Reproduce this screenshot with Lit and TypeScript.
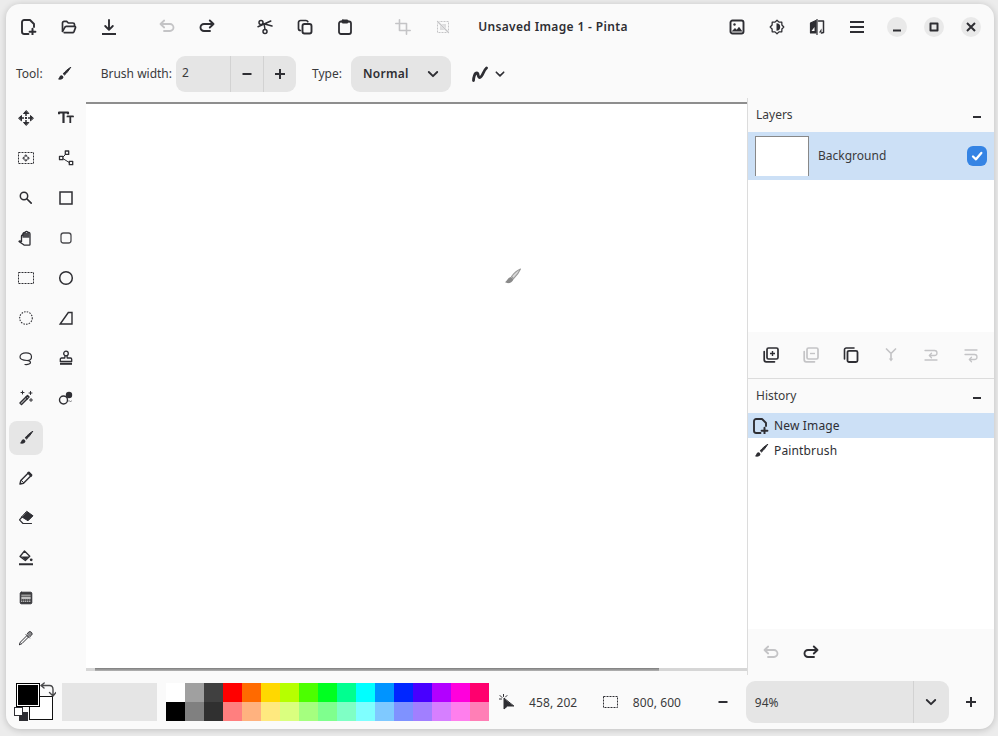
import { LitElement, html, css, svg } from 'lit'
import { customElement } from 'lit/decorators.js'

const icon = (body: unknown, size = 16, cls = '') => html`<svg class=${cls} width=${size} height=${size} viewBox="0 0 16 16" fill="none" stroke="currentColor" stroke-width="1.5" stroke-linecap="round" stroke-linejoin="round">${body}</svg>`

const paths = {
	newImage: svg`<path d="M7.500 15H3.200A2.200 2.200 0 0 1 1 12.800V3.200A2.200 2.200 0 0 1 3.200 1H9l4 4v3" stroke-width="1.900"/><path d="M11.500 9.800v5.800M8.600 12.800h5.800" stroke-width="2"/>`,
	open: svg`<path d="M1.500 12V4a1.600 1.600 0 0 1 1.600-1.600h2.600l1.600 1.600h4.600A1.600 1.600 0 0 1 13.500 5.600V7" stroke-width="1.700"/><path d="M3.200 13.600h8.300a1.600 1.600 0 0 0 1.500-1l1.500-4a.9.9 0 0 0-.9-1.200H5.200a1.500 1.500 0 0 0-1.400 1L1.600 12.400" stroke-width="1.700"/>`,
	save: svg`<path d="M8 1v9.500M4.200 7 8 10.800 11.800 7" stroke-width="1.900"/><path d="M1 15h14" stroke-width="1.800" stroke-linecap="butt"/>`,
	undo: svg`<path d="M5.200 1.500 1.500 5l3.700 3.500M1.500 5H11a3.500 3.500 0 0 1 0 7H5" stroke-width="1.800"/>`,
	redo: svg`<path d="M10.800 1.500 14.500 5l-3.700 3.500M14.500 5H5a3.500 3.500 0 0 0 0 7h6" stroke-width="1.900"/>`,
	cut: svg`<circle cx="4" cy="3.500" r="2" stroke-width="1.500"/><circle cx="8" cy="12.500" r="2" stroke-width="1.500"/><path d="M5.800 4.500 15 7M1 7.800 13.800 2M7.300 6l.7 4.500" stroke-width="1.500"/>`,
	copy: svg`<path d="M3.500 11.500A2 2 0 0 1 1.500 9.500V3.500a2 2 0 0 1 2-2h5.500a2 2 0 0 1 1.800 1.200" stroke-width="1.700"/><rect x="5.500" y="5" width="9" height="9.500" rx="2" stroke-width="1.900"/>`,
	paste: svg`<rect x="2" y="2.500" width="12" height="12.500" rx="2" stroke-width="1.800"/><rect x="5" y="1" width="6" height="3" rx=".8" fill="currentColor" stroke-width="1"/>`,
	crop: svg`<path d="M4.500 .8V11.500H15.200M.8 4.500H11.500V15.200" stroke-width="1.600"/>`,
	deselect: svg`<rect x="2.500" y="2.500" width="11" height="11" stroke-width="1" stroke-dasharray="2 1" stroke-linecap="butt"/><rect x="5" y="5" width="6" height="6" fill="currentColor" stroke="none" opacity=".55"/><path d="M2 2l12 12" stroke="#fafafa" stroke-width="2.400"/><path d="M2.500 2.500l11 11" stroke-width="1.200"/>`,
	image: svg`<rect x="1.500" y="1.500" width="13" height="13" rx="2" stroke-width="1.900"/><circle cx="5.500" cy="5.500" r="1.200" fill="currentColor" stroke="none"/><path d="M2.500 12.500 6 9l1.700 1.700 2.300-3 3.500 4.800z" fill="currentColor" stroke="none"/>`,
	theme: svg`<path d="M8 1.200 10 3.100l2.800.1.100 2.800L14.800 8l-1.900 2-.1 2.800-2.800.1L8 14.800l-2-1.900-2.800-.1-.1-2.800L1.200 8l1.900-2 .1-2.800 2.800-.1z" stroke-width="1.300"/><path d="M7.500 4.300a3.700 3.700 0 0 1 0 7.400z" fill="currentColor" stroke="none"/>`,
	flip: svg`<path d="M7 1.500 1.500 4v10H7z" fill="currentColor" stroke="currentColor" stroke-width="1.200"/><path d="M8 0v16" stroke-width="1.200"/><path d="M9.500 2h5v11.500l-2 .5" stroke-width="1.500"/><path d="M2.500 12 5.500 8v4z" fill="#fafafa" stroke="none"/><path d="M10 13.500 12.500 9.500V13.500z" fill="currentColor" stroke="none"/>`,
	menu: svg`<path d="M1 3h14M1 8h14M1 13h14" stroke-width="1.800" stroke-linecap="butt"/>`,
	minus: svg`<path d="M3.500 8h9" stroke-width="2" stroke-linecap="butt"/>`,
	plus: svg`<path d="M3 8h10M8 3v10" stroke-width="2" stroke-linecap="butt"/>`,
	chevron: svg`<path d="M3.800 6 8 10.200 12.200 6" stroke-width="1.900"/>`,
	brush: svg`<path d="M14.500 1.500c-2 1-5.500 4-7.300 6.300l1.300 1.200C10.800 7 13.500 3.500 14.500 1.500z" fill="currentColor" stroke-width="1"/><path d="M5.800 9.200c-2 0-2.300 1.500-2.700 2.600-.2.700-.6 1-1.300 1.300 1.600 1.200 4.500.8 5.400-1 .5-.9.300-1.800-1.400-2.900z" fill="currentColor" stroke="none"/>`,
	curve: svg`<path d="M1.500 14.500c.1-3.500 1.300-7.500 3.300-7.500 2 0 .8 4.500 3 4.500C10.500 11.500 11 5 14.500 2" stroke-width="2.800"/>`,
	move: svg`<path d="M8 3v10M3 8h10" stroke-width="1.500"/><path d="M8 .8 5.500 3.500h5zM8 15.200l-2.500-2.700h5zM.8 8l2.700-2.500v5zM15.200 8l-2.700-2.500v5z" fill="currentColor" stroke-width="1"/><rect x="6" y="6" width="4" height="4" fill="#fafafa" stroke="none"/><rect x="7" y="7" width="2" height="2" fill="currentColor" stroke="none"/>`,
	text: svg`<path d="M1 4.200V2.500h9v1.700M5.500 2.500v10.500" stroke-width="2.200" stroke-linecap="butt"/><path d="M9.500 7.200V6.300H15v.9M12.300 6.300V13" stroke-width="1.800" stroke-linecap="butt"/>`,
	moveSel: svg`<rect x=".5" y="2.500" width="15" height="11" stroke-width="1" stroke-dasharray="2 1" stroke-linecap="butt"/><path d="M8 4.800 9.200 6.200H6.800zM8 11.200 9.200 9.800H6.800zM4.800 8 6.200 6.800V9.200zM11.200 8 9.800 6.800V9.200z" fill="currentColor" stroke="currentColor" stroke-width=".6"/>`,
	shape: svg`<path d="M8.500 3.500 4 8l8 5" stroke-width="1"/><rect x="7.300" y="1" width="3.400" height="3.400" fill="#fafafa" stroke-width="1.300"/><rect x="1.500" y="6.300" width="3.400" height="3.400" fill="#fafafa" stroke-width="1.300"/><rect x="11.300" y="11.300" width="3.400" height="3.400" fill="#fafafa" stroke-width="1.300"/>`,
	zoom: svg`<circle cx="6" cy="6" r="3.700" stroke-width="1.500"/><path d="M9 9l4.200 4.200" stroke-width="1.700"/>`,
	rect: svg`<rect x="2" y="2" width="12" height="12" stroke-width="1.500" stroke-linecap="butt" stroke-linejoin="miter"/>`,
	hand: svg`<path d="M6 15c-1.500-1-3.500-2.500-5-3.500.4-1 1.400-.8 2.500 0V6c0-1 1-1.200 1.300-.4C5 3 6 2 7 2.700 7.500 1 9.500 1 10 2.500 10.800 2 12 2.500 12 4v10.500a.7.7 0 0 1-.7.700z" stroke-width="1.300"/><path d="M4.500 2.800h7v5h-7z" fill="currentColor" stroke="none" opacity=".85"/>`,
	roundRect: svg`<rect x="3" y="3" width="10" height="10" rx="2.500" stroke-width="1.300" opacity=".85"/>`,
	rectSel: svg`<rect x=".5" y="2.500" width="15" height="11" stroke-width="1" stroke-dasharray="2 1" stroke-linecap="butt"/>`,
	ellipse: svg`<circle cx="8" cy="8" r="6.300" stroke-width="1.500"/>`,
	ellipseSel: svg`<circle cx="8" cy="8" r="6.300" stroke-width="1.100" stroke-dasharray="1.500 1.200" stroke-linecap="butt"/>`,
	freeform: svg`<path d="M2.200 14 10.300 2.500H14V14z" stroke-width="1.400" stroke-linejoin="miter"/>`,
	lasso: svg`<path d="M9 10.500c3 0 4.500-1 4.500-3.800C13.500 4 11.500 2.800 8 2.800 4.500 2.800 2 4.500 2 7c0 2.500 3.500 3.300 7 3.500 2 .1 3.500.8 3.500 2S10.500 14.800 7 14.500" stroke-width="1.200"/>`,
	stamp: svg`<circle cx="8" cy="3.500" r="2.300" stroke-width="1.300"/><path d="M7 5.800 6.800 8H3.500a1.200 1.200 0 0 0-1.200 1.200v2.300h11.400V9.200A1.200 1.200 0 0 0 12.500 8H9.200L9 5.800" stroke-width="1.300"/><path d="M2 13.800h12" stroke-width="2" stroke-linecap="butt"/>`,
	wand: svg`<path d="M2 13 9.500 5.500l1.500 1.500L3.500 14.500z" fill="#fafafa" stroke-width="1.500"/><path d="M7.800 7.200l1.500 1.500" stroke-width="1.300"/><path d="M4.500 1v3M3 2.500h3M12.500 1.500v3M11 3h3M13 8.500v3M11.500 10h3" stroke-width="1"/>`,
	clone: svg`<circle cx="5.500" cy="10" r="4" stroke-width="1.400"/><circle cx="11" cy="5" r="3.200" fill="currentColor" stroke="none"/><path d="M11 10.500v1M13.500 11l-1 .5" stroke-width="1" opacity=".6"/>`,
	pencil: svg`<path d="M2 14l.8-3.500L11 2.300l2.700 2.700L5.500 13.200z" stroke-width="1.400"/><path d="M10.400 2.900l2.700 2.700" stroke-width="2.200"/><path d="M3.500 10.500 5.500 12.500" stroke-width="1"/>`,
	eraser: svg`<path d="M9 1.500 15 5.800 10 10.800 4 7z" fill="currentColor" stroke="currentColor" stroke-width="1"/><path d="M4 7 1.500 9.800 5 13.500h8.500" stroke-width="1.200"/>`,
	fill: svg`<path d="M6.500 1 11.800 6.300 7.300 10.500 2 6.500z" stroke-width="1.300"/><path d="M2.800 6.500h8.200L7.300 10z" fill="currentColor" stroke="none"/><circle cx="13.200" cy="9.800" r="1.400" fill="currentColor" stroke="none"/><path d="M1 14.200h14" stroke-width="2" stroke-linecap="butt"/>`,
	gradient: svg`<rect x="2.200" y="2.200" width="11.600" height="11.600" rx="1.200" fill="#3a3a3c" stroke-width=".9"/><rect x="3.300" y="4.500" width="9.400" height="2" fill="#9a9a9a" stroke="none"/><rect x="3.300" y="7" width="9.400" height="2" fill="#c2c2c2" stroke="none"/><path d="M3.300 10h9.400M3.300 11.500h9.400" stroke="#e8e8e8" stroke-width="1" stroke-dasharray="1 1" stroke-linecap="butt"/>`,
	picker: svg`<path d="M1.500 14.500c0-1 .5-2 1-2.500L9 5.500l1.500 1.500L4 13.500c-.5.500-1.500 1-2.500 1z" stroke-width="1"/><path d="M8 4.500 11.500 8M9.500 3.500l1-1.300c.7-.8 2-.8 2.900.1.900.9.900 2.100.2 2.800L12.400 6.300z" fill="#8a8a8c" stroke-width="1"/>`,
	layerAdd: svg`<path d="M1.200 4.500v8.300a2 2 0 0 0 2 2h8.300" stroke-width="1.700"/><rect x="4" y="1" width="11" height="11" rx="1.500" stroke-width="1.700"/><path d="M9.500 4v5M7 6.500h5" stroke-width="1.400" stroke-linecap="butt"/>`,
	layerRemove: svg`<path d="M1.200 4.500v8.300a2 2 0 0 0 2 2h8.300" stroke-width="1.700"/><rect x="4" y="1" width="11" height="11" rx="1.500" stroke-width="1.700"/><path d="M7 6.500h5" stroke-width="1.400" stroke-linecap="butt"/>`,
	layerDup: svg`<path d="M1.500 12V2.800A1.800 1.800 0 0 1 3.300 1H11" stroke-width="1.600"/><rect x="4.500" y="3.800" width="10" height="11.200" rx="1.500" stroke-width="1.800"/>`,
	merge: svg`<path d="M3.500 2 8 6.500 12.500 2M8 6.500V12" stroke-width="1.700"/><path d="M5.800 11.500 8 14.500l2.200-3z" fill="currentColor" stroke="none"/>`,
	layerUp: svg`<path d="M2 3.500h9.500a2.500 2.500 0 0 1 0 5H6.500M8.500 6.300 6.300 8.500l2.200 2.200M2 13h12" stroke-width="1.300"/>`,
	layerDown: svg`<path d="M2 3h12M2 7.500h9.500a2.500 2.500 0 0 1 0 5H6.500M8.500 10.300 6.300 12.500l2.200 2.200" stroke-width="1.300"/>`,
	cursor: svg`<path d="M5 4.500v10.500l3.500-3h6z" fill="currentColor" stroke="currentColor" stroke-width="1"/><path d="M1 1.500l2 2M4.500 0v2.500M8 1.500l-1.500 1.500M0 5h2.500" stroke-width="1"/>`,
	selSize: svg`<rect x=".5" y="2.500" width="14" height="11" stroke-width="1" stroke-dasharray="2 1" stroke-linecap="butt"/>`,
	tick: svg`<path d="M4 8.500 7 11.300 12.300 5" stroke="#fff" stroke-width="2.300"/>`,
	swap: svg`<path d="M1 4.500 4.200 2M1 4.500 4 7M1.500 4.500H9.500c2.500 0 3.500 1.500 3.500 4V14M9.500 11.500 13 15l3-3.500" stroke-width="1.400"/>`,
}

const tools = [
	paths.move, paths.text, paths.moveSel, paths.shape, paths.zoom, paths.rect, paths.hand, paths.roundRect,
	paths.rectSel, paths.ellipse, paths.ellipseSel, paths.freeform, paths.lasso, paths.stamp, paths.wand, paths.clone,
	paths.brush, null, paths.pencil, null, paths.eraser, null, paths.fill, null, paths.gradient, null, paths.picker, null,
]

const topColors = ['#ffffff', '#a0a0a0', '#404040', '#ff0000', '#ff6a00', '#ffd800', '#b6ff00', '#4cff00', '#00ff21', '#00ff90', '#00ffff', '#0094ff', '#0026ff', '#4800ff', '#b200ff', '#ff00dc', '#ff006e']
const bottomColors = ['#000000', '#808080', '#303030', '#ff7f7f', '#ffb27f', '#ffe97f', '#daff7f', '#a5ff7f', '#7fff8e', '#7fffc5', '#7fffff', '#7fc9ff', '#7f92ff', '#a17fff', '#d67fff', '#ff7fed', '#ff7fb6']

@customElement('app-root')
export class AppRoot extends LitElement {
	static styles = css`
		:host {
			display: block;
			width: 998px;
			height: 736px;
			box-sizing: border-box;
			padding: 4px 4px 7px 6px;
			background: #ececec;
			font-family: 'Noto Sans', sans-serif;
			font-size: 12px;
			color: #3a3a3c;
			overflow: hidden;
		}
		* {
			box-sizing: border-box;
		}
		svg {
			display: block;
			flex: none;
		}
		.window {
			width: 988px;
			height: 725px;
			display: flex;
			flex-direction: column;
			background: #fafafa;
			border-radius: 14px;
			overflow: hidden;
			box-shadow: 0 1px 7px rgba(0, 0, 0, 0.2);
		}

		.header {
			height: 46px;
			flex: none;
			display: flex;
			align-items: center;
			padding-left: 3px;
			color: #2e2e33;
		}
		.group {
			display: flex;
			margin-right: 18px;
		}
		.hbtn {
			width: 40px;
			height: 34px;
			display: flex;
			align-items: center;
			justify-content: center;
		}
		.off {
			color: #c4c4c6;
		}
		.title {
			width: 180px;
			margin: -1px 0 0 -18px;
			text-align: center;
			font-weight: 600;
			font-size: 12px;
			letter-spacing: 0.35px;
			color: #2e2e33;
		}
		.right-group {
			display: flex;
			margin-left: auto;
		}
		.wbtns {
			display: flex;
			gap: 17px;
			margin: 0 13px 0 10px;
		}
		.wbtn {
			width: 20px;
			height: 20px;
			border-radius: 50%;
			background: #e9e9e9;
			display: flex;
			align-items: center;
			justify-content: center;
		}

		.toolbar {
			height: 48px;
			flex: none;
			display: flex;
			align-items: flex-start;
			padding: 6px 0 0 10px;
		}
		.toolbar > * {
			height: 36px;
			display: flex;
			align-items: center;
			flex: none;
		}
		.toolbar .label {
			padding-bottom: 2px;
		}
		.pill {
			background: #e5e5e5;
			border-radius: 9px;
		}
		.num {
			width: 120px;
			margin-left: 4px;
		}
		.num .val {
			width: 55px;
			height: 100%;
			padding-left: 6px;
			line-height: 34px;
			border-right: 1px solid #d2d2d2;
		}
		.num .step {
			width: 32px;
			height: 100%;
			display: flex;
			align-items: center;
			justify-content: center;
			color: #2e2e33;
		}
		.num .step + .step {
			border-left: 1px solid #d2d2d2;
			width: 33px;
		}
		.tool-ic {
			margin: 0 29px 0 13px;
			color: #2e2e33;
		}
		.type-label {
			margin-left: 16px;
		}
		.combo {
			width: 100px;
			margin-left: 9px;
			padding: 0 10px 0 12px;
			justify-content: space-between;
			font-weight: 600;
			letter-spacing: 0.3px;
			color: #2e2e33;
		}
		.combo span {
			padding-bottom: 2px;
		}
		.curve {
			margin-left: 21px;
			gap: 5px;
			color: #2e2e33;
		}

		.main {
			flex: 1;
			display: flex;
			min-height: 0;
		}
		.tools {
			width: 80px;
			flex: none;
			display: grid;
			grid-template-columns: 40px 40px;
			grid-auto-rows: 40px;
			color: #2e2e33;
		}
		.tools div {
			display: flex;
			align-items: center;
			justify-content: center;
		}
		.tools div.active::before {
			content: '';
			position: absolute;
			width: 34px;
			height: 34px;
			border-radius: 8px;
			background: #e6e6e6;
		}
		.tools svg {
			position: relative;
		}
		.canvas-col {
			width: 661px;
			flex: none;
			display: flex;
			flex-direction: column;
			padding: 4px 0;
		}
		.hline {
			height: 2px;
			flex: none;
			background: #8e8e8e;
		}
		.canvas {
			flex: 1;
			background: #fff;
			position: relative;
		}
		.cursor {
			position: absolute;
			left: 418px;
			top: 164px;
			color: #8c8c8c;
		}
		.hscroll {
			height: 3px;
			flex: none;
			background: #d6d6d6;
			padding-left: 9px;
		}
		.hscroll div {
			width: 564px;
			height: 100%;
			background: linear-gradient(#7c7c7c, #b5b5b5);
		}

		.panel {
			flex: 1;
			display: flex;
			flex-direction: column;
			border-left: 1px solid #dcdcdc;
		}
		.phead {
			flex: none;
			display: flex;
			align-items: center;
			justify-content: space-between;
			padding: 0 13px 2px 8px;
		}
		.phead.layers {
			height: 34px;
		}
		.phead.history {
			height: 35px;
			border-top: 1px solid #dcdcdc;
		}
		.dash {
			width: 8px;
			height: 2px;
			margin-top: 6px;
			background: #2e2e33;
		}
		.list {
			background: #fff;
		}
		.list.layers {
			height: 200px;
			flex: none;
		}
		.list.history {
			flex: 1;
		}
		.layer-row {
			height: 48px;
			display: flex;
			align-items: center;
			padding-left: 7px;
			background: #cce0f6;
		}
		.layer-row span {
			padding-bottom: 2px;
		}
		.thumb {
			width: 54px;
			height: 40px;
			margin-right: 9px;
			background: #fff;
			border: 1px solid #888;
			border-bottom: none;
		}
		.check {
			width: 20px;
			height: 20px;
			margin: 0 7px 0 auto;
			border-radius: 6px;
			background: #3584e4;
			display: flex;
			align-items: center;
			justify-content: center;
		}
		.hist-row {
			height: 25px;
			display: flex;
			align-items: center;
			gap: 5px;
			padding-left: 5px;
			letter-spacing: 0.15px;
			color: #2e2e33;
		}
		.hist-row.sel {
			background: #cce0f6;
		}
		.ptools {
			height: 46px;
			flex: none;
			display: flex;
			align-items: center;
			padding-left: 3px;
			color: #2e2e33;
		}
		.ptools.hist {
			padding-top: 2px;
		}
		.ptools div {
			width: 40px;
			display: flex;
			justify-content: center;
		}
		.ptools .off {
			color: #c4c4c6;
		}

		.status {
			height: 54px;
			flex: none;
			display: flex;
			align-items: center;
			padding-left: 10px;
		}
		.colors {
			width: 38px;
			height: 38px;
			flex: none;
			position: relative;
			margin-top: -1px;
		}
		.colors div {
			position: absolute;
		}
		.c-sec {
			left: 13px;
			top: 13px;
			width: 24px;
			height: 24px;
			background: #fff;
			border: 1px solid #111;
		}
		.c-pri {
			left: 0;
			top: 0;
			width: 24px;
			height: 24px;
			background: #000;
			border: 1px solid #000;
			box-shadow: inset 0 0 0 1px #fff;
		}
		.c-rb {
			left: 3px;
			top: 29px;
			width: 9px;
			height: 9px;
			background: #2e2e33;
		}
		.c-rw {
			left: -2px;
			top: 24px;
			width: 9px;
			height: 9px;
			background: #fff;
			border: 1px solid #2e2e33;
		}
		.c-swap {
			left: 24px;
			top: -2px;
			color: #48484a;
		}
		.swatch {
			width: 95px;
			height: 38px;
			flex: none;
			margin: 0 9px 0 8px;
			background: #e5e5e5;
		}
		.palette {
			flex: none;
			display: grid;
			grid-template-columns: repeat(17, 19px);
			grid-auto-rows: 19px;
		}
		.st-ic {
			color: #2e2e33;
		}
		.cur-ic {
			margin-left: 10px;
		}
		.sel-ic {
			margin-left: 1px;
		}
		.st-text {
			width: 74px;
			margin-left: 14px;
			letter-spacing: 0.1px;
		}
		.st-text.short {
			width: 69px;
		}
		.plain {
			width: 46px;
			display: flex;
			justify-content: center;
			color: #2e2e33;
		}
		.zoombox {
			width: 203px;
			height: 42px;
			display: flex;
			align-items: center;
			padding-left: 9px;
			flex: none;
		}
		.zoombox span {
			flex: 1;
		}
		.zoombox div {
			width: 36px;
			height: 100%;
			border-left: 1px solid #d2d2d2;
			display: flex;
			align-items: center;
			justify-content: center;
			color: #2e2e33;
		}
	`

	private swatches() {
		return [...topColors, ...bottomColors].map((c) => html`<div style="background:${c}"></div>`)
	}

	private headerBtn(p: unknown, off = false) {
		return html`<div class="hbtn ${off ? 'off' : ''}">${icon(p)}</div>`
	}

	render() {
		return html`
			<div class="window">
				<div class="header">
					<div class="group">${this.headerBtn(paths.newImage)}${this.headerBtn(paths.open)}${this.headerBtn(paths.save)}</div>
					<div class="group">${this.headerBtn(paths.undo, true)}${this.headerBtn(paths.redo)}</div>
					<div class="group">${this.headerBtn(paths.cut)}${this.headerBtn(paths.copy)}${this.headerBtn(paths.paste)}</div>
					<div class="group">${this.headerBtn(paths.crop, true)}${this.headerBtn(paths.deselect, true)}</div>
					<div class="title">Unsaved Image 1 - Pinta</div>
					<div class="right-group">${this.headerBtn(paths.image)}${this.headerBtn(paths.theme)}${this.headerBtn(paths.flip)}${this.headerBtn(paths.menu)}</div>
					<div class="wbtns">
						<div class="wbtn">${icon(svg`<path d="M4 11.500h8" stroke-width="2" stroke-linecap="butt"/>`)}</div>
						<div class="wbtn">${icon(svg`<rect x="4.500" y="4.500" width="7" height="7" stroke-width="2"/>`)}</div>
						<div class="wbtn">${icon(svg`<path d="M4 4l8 8M12 4l-8 8" stroke-width="2" stroke-linecap="butt"/>`)}</div>
					</div>
				</div>

				<div class="toolbar">
					<span class="label">Tool:</span>
					<span class="tool-ic">${icon(paths.brush)}</span>
					<span class="label">Brush width:</span>
					<div class="pill num">
						<div class="val">2</div>
						<div class="step">${icon(paths.minus)}</div>
						<div class="step">${icon(paths.plus)}</div>
					</div>
					<span class="label type-label">Type:</span>
					<div class="pill combo"><span>Normal</span>${icon(paths.chevron)}</div>
					<div class="curve">${icon(paths.curve)}${icon(paths.chevron, 14)}</div>
				</div>

				<div class="main">
					<div class="tools">
						${tools.map((p, i) => html`<div class=${i === 16 ? 'active' : ''}>${p ? icon(p) : ''}</div>`)}
					</div>
					<div class="canvas-col">
						<div class="hline"></div>
						<div class="canvas">
							<div class="cursor">
								${icon(svg`<path d="M15.500 1c-2.500 1-6.500 4.500-8.500 7l2 2C11.500 7.500 14.500 3.500 15.500 1z" fill="#d8d8d8" stroke="#9a9a9a" stroke-width="1"/><path d="M6.500 8.500C4 9 3.500 11 1 13.500c2.500 1.500 6.500 1 8-3z" fill="#8a8a8a" stroke="none"/>`, 17)}
							</div>
						</div>
						<div class="hscroll"><div></div></div>
					</div>
					<div class="panel">
						<div class="phead layers"><span>Layers</span><div class="dash"></div></div>
						<div class="list layers">
							<div class="layer-row">
								<div class="thumb"></div>
								<span>Background</span>
								<div class="check">${icon(paths.tick)}</div>
							</div>
						</div>
						<div class="ptools">
							<div>${icon(paths.layerAdd)}</div>
							<div class="off">${icon(paths.layerRemove)}</div>
							<div>${icon(paths.layerDup)}</div>
							<div class="off">${icon(paths.merge)}</div>
							<div class="off">${icon(paths.layerUp)}</div>
							<div class="off">${icon(paths.layerDown)}</div>
						</div>
						<div class="phead history"><span>History</span><div class="dash"></div></div>
						<div class="list history">
							<div class="hist-row sel">${icon(paths.newImage)}<span>New Image</span></div>
							<div class="hist-row">${icon(paths.brush)}<span>Paintbrush</span></div>
						</div>
						<div class="ptools hist">
							<div class="off">${icon(paths.undo)}</div>
							<div>${icon(paths.redo)}</div>
						</div>
					</div>
				</div>

				<div class="status">
					<div class="colors">
						<div class="c-sec"></div>
						<div class="c-pri"></div>
						<div class="c-rb"></div>
						<div class="c-rw"></div>
						<div class="c-swap">${icon(paths.swap)}</div>
					</div>
					<div class="swatch"></div>
					<div class="palette">${this.swatches()}</div>
					<span class="st-ic cur-ic">${icon(paths.cursor)}</span>
					<span class="st-text">458, 202</span>
					<span class="st-ic sel-ic">${icon(paths.selSize)}</span>
					<span class="st-text short">800, 600</span>
					<div class="plain">${icon(paths.minus)}</div>
					<div class="pill zoombox"><span>94%</span><div>${icon(paths.chevron)}</div></div>
					<div class="plain">${icon(paths.plus)}</div>
				</div>
			</div>
		`
	}
}
